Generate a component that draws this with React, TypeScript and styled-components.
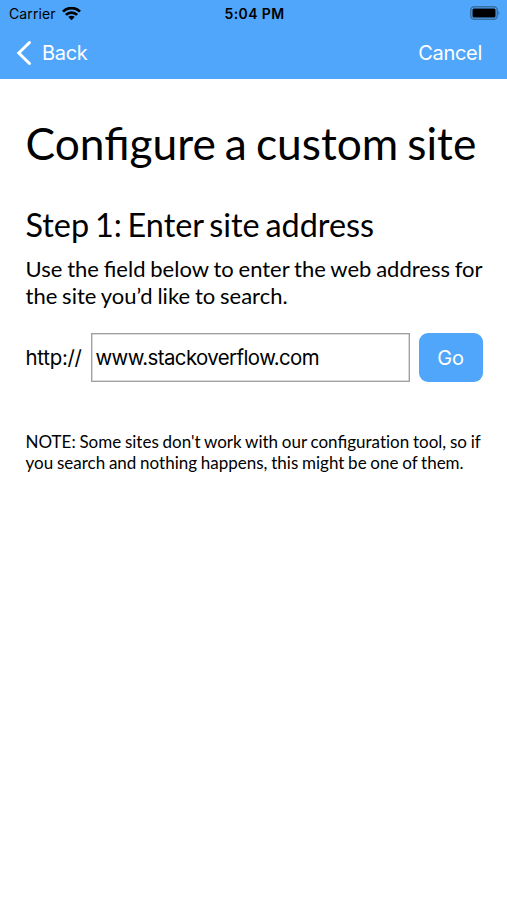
import React from "react";
import styled, { createGlobalStyle } from "styled-components";

const Global = createGlobalStyle`
  *{box-sizing:border-box}
  body{margin:0;background:#fff;font-family:Lato,sans-serif;color:#000}
`;
const Screen = styled.div`width:507px;height:900px;overflow:hidden;background:#fff;`;
const Header = styled.header`height:79px;background:#50a6fa;font-family:Inter,sans-serif;`;
const StatusBar = styled.div`
  height:27px;padding:0 7px 0 9px;display:grid;grid-template-columns:1fr auto 1fr;align-items:center;
  font-size:14px;line-height:27px;white-space:nowrap;
`;
const Carrier = styled.div`display:flex;align-items:center;gap:6px;letter-spacing:.1px;`;
const Time = styled.div`font-weight:600;letter-spacing:.4px;`;
const Battery = styled.div`display:flex;justify-content:flex-end;margin-top:-1px;`;
const NavBar = styled.nav`height:52px;padding:0 25px 0 16px;display:flex;justify-content:space-between;align-items:center;`;
const NavButton = styled.button`
  border:0;padding:0;background:none;color:#fff;font:400 20px/52px Inter,sans-serif;letter-spacing:-.3px;
  display:flex;align-items:center;gap:10px;
`;
const Content = styled.main`padding:37px 24px 0 25.5px;white-space:nowrap;`;
const Title = styled.h1`margin:0;font-weight:400;font-size:44.3px;line-height:54px;word-spacing:-2.3px;`;
const Subtitle = styled.h2`margin:38px 0 0;font-weight:400;font-size:32.4px;line-height:34px;word-spacing:-2.5px;`;
const Text = styled.p`margin:14px 0 0;font-size:22px;line-height:26.5px;word-spacing:-.8px;`;
const Form = styled.form`margin-top:24px;display:flex;align-items:center;height:49px;`;
const Prefix = styled.label`width:65px;font:400 20.4px Inter,sans-serif;letter-spacing:-.25px;`;
const Field = styled.input`
  width:319px;height:49px;border:1.5px solid #a0a0a0;box-shadow:inset 0 0 0 .5px #b8b8b8;border-radius:0;padding:0 4px;
  font:400 20.4px Inter,sans-serif;letter-spacing:-.58px;outline:0;
`;
const Go = styled.button`
  margin-left:9px;width:64px;height:49px;border:0;border-radius:9px;background:#50a6fa;color:#fff;
  font:400 20px Inter,sans-serif;letter-spacing:-.2px;
`;
const Note = styled.p`margin:49px 0 0;font-size:17px;line-height:21px;word-spacing:-.6px;`;

export default function App() {
  return (
    <Screen>
      <Global />
      <Header>
        <StatusBar>
          <Carrier>Carrier
            <svg width="19" height="14" viewBox="0 0 19 14" fill="none" stroke="#000" strokeWidth="2.7">
              <path d="M1 4.6a12 12 0 0 1 17 0M3.9 7.9a7.8 7.8 0 0 1 11.2 0" />
              <path d="M9.5 13.3 6.3 10.1a4.6 4.6 0 0 1 6.4 0z" fill="#000" stroke="none" />
            </svg>
          </Carrier>
          <Time>5:04 PM</Time>
          <Battery>
            <svg width="30" height="14" viewBox="0 0 30 14">
              <rect x=".75" y=".75" width="26.5" height="12.5" rx="3.5" fill="none" stroke="#376f9f" strokeWidth="1.5" />
              <rect x="2.5" y="2.5" width="23" height="9" rx="1.5" />
              <path d="M28.3 5q2.4 2 0 4z" fill="#376f9f" />
            </svg>
          </Battery>
        </StatusBar>
        <NavBar>
          <NavButton>
            <svg width="16" height="26" viewBox="0 0 16 26" fill="none" stroke="#fff" strokeWidth="3" strokeLinecap="round"><path d="M13.5 2.500 2.800 13l10.700 10.500" /></svg>
            Back
          </NavButton>
          <NavButton>Cancel</NavButton>
        </NavBar>
      </Header>
      <Content>
        <Title>Configure a custom site</Title>
        <Subtitle>Step 1: Enter site address</Subtitle>
        <Text>Use the field below to enter the web address for<br />the site you’d like to search.</Text>
        <Form>
          <Prefix htmlFor="site">http://</Prefix>
          <Field id="site" defaultValue="www.stackoverflow.com" />
          <Go type="button">Go</Go>
        </Form>
        <Note>NOTE: Some sites don't work with our configurat&zwnj;ion tool, so if<br />you search and nothing happens, this might be one of them.</Note>
      </Content>
    </Screen>
  );
}
